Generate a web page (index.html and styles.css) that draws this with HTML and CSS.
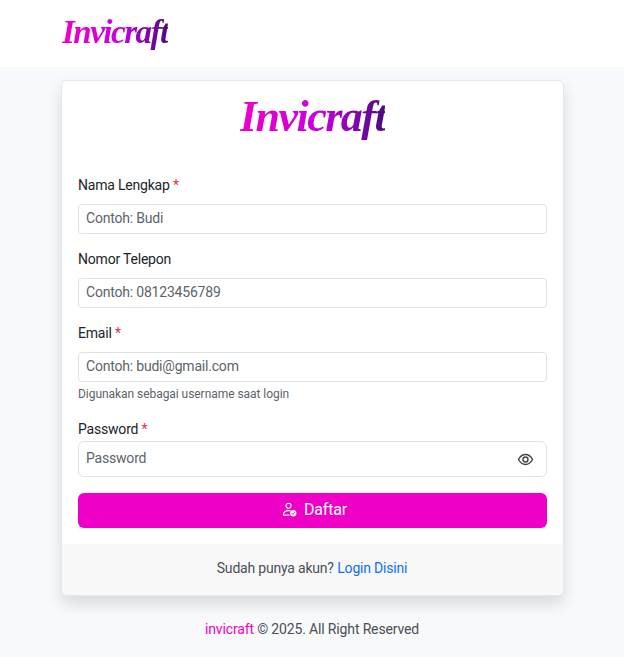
FILE: index.html
```html
<!DOCTYPE html>
<html lang="id">
<head>
<meta charset="utf-8">
<title>Invicraft - Daftar</title>
<link rel="stylesheet" href="styles.css">
</head>
<body>
<header class="navbar"><a class="brand brand-small">Invicraft</a></header>
<main class="page">
  <section class="card">
    <div class="card-logo"><span class="brand brand-large">Invicraft</span></div>
    <form class="form">
      <div class="field">
        <label class="label">Nama Lengkap <span class="req">*</span></label>
        <input class="input" type="text" placeholder="Contoh: Budi">
      </div>
      <div class="field">
        <label class="label">Nomor Telepon</label>
        <input class="input" type="text" placeholder="Contoh: 08123456789">
      </div>
      <div class="field field-email">
        <label class="label">Email <span class="req">*</span></label>
        <input class="input" type="text" placeholder="Contoh: budi@gmail.com">
        <small class="hint">Digunakan sebagai username saat login</small>
      </div>
      <div class="field field-pass">
        <label class="label label-tight">Password <span class="req">*</span></label>
        <div class="pass-box">
          <input class="pass-input" type="password" placeholder="Password">
          <svg class="eye" viewBox="0 0 24 24" width="17" height="17" fill="none" stroke="#444" stroke-width="2" stroke-linecap="round" stroke-linejoin="round"><path d="M2 12c2.600-4.600 6-7 10-7s7.400 2.400 10 7c-2.600 4.600-6 7-10 7s-7.400-2.400-10-7z"/><circle cx="12" cy="12" r="3.500"/></svg>
        </div>
      </div>
      <button class="submit" type="button">
        <svg viewBox="0 0 16 16" width="15" height="15" fill="none" stroke="#fff" stroke-width="1.200" stroke-linecap="round"><circle cx="7" cy="4" r="2.700"/><path d="M1.500 14c0-3 2.200-4.800 5.500-4.800 .6 0 1.100.1 1.600.2M1.500 14h6"/><circle cx="12" cy="12" r="3.400" fill="#fff" stroke="none"/><path d="M10.500 12l1.100 1.100 1.900-2" stroke="#ee00c6" stroke-width="1"/></svg>
        <span>Daftar</span>
      </button>
    </form>
    <div class="card-footer">Sudah punya akun? <a class="link">Login Disini</a></div>
  </section>
  <footer class="copy"><span class="copy-brand">invicraft</span> © 2025. All Right Reserved</footer>
</main>
</body>
</html>
```
FILE: styles.css
```css
* { box-sizing: border-box; }
html, body { margin: 0; height: 100%; }
body {
  background: #f8f9fa;
  color: #212529;
  font-family: Roboto, "Liberation Sans", sans-serif;
  font-size: 14px;
  letter-spacing: -0.200px;
  overflow: hidden;
}
.navbar {
  height: 67px;
  background: #fff;
  padding: 0 62px 3px;
  display: flex;
  align-items: center;
}
.brand {
  font-family: "Liberation Serif", serif;
  font-weight: 700;
  font-style: italic;
  background: linear-gradient(90deg, #f000c8 0%, #c800e0 55%, #4b0a82 100%);
  -webkit-background-clip: text;
  background-clip: text;
  color: transparent;
  line-height: 1.100;
  display: inline-block;
}
.brand-small { font-size: 33px; letter-spacing: -1.500px; }
.brand-large { font-size: 44px; letter-spacing: -1.500px; }
.page { padding: 13px 60px 0 61px; }
.card {
  background: #fff;
  border: 1px solid #e6e7e9;
  border-radius: 6px;
  box-shadow: 0 8px 16px rgba(0, 0, 0, .13);
  overflow: hidden;
}
.card-logo {
  height: 72px;
  display: flex;
  align-items: center;
  justify-content: center;
}
.form { padding: 24px 16px 16px; display: flex; flex-direction: column; }
.field { display: flex; flex-direction: column; margin-bottom: 17px; }
.field-email { margin-bottom: 20px; }
.field-pass { margin-bottom: 16px; }
.label { height: 17px; line-height: 17px; margin-bottom: 10px; color: #212529; }
.label-tight { margin-bottom: 3px; }
.req { color: #dc3545; }
.input {
  height: 30px;
  border: 1px solid #dee2e6;
  border-radius: 4px;
  padding: 0 7px 3px;
  font: 14px Roboto, sans-serif;
  letter-spacing: -0.200px;
  background: #fff;
  outline: none;
}
.input::placeholder, .pass-input::placeholder { color: #5c636a; opacity: 1; }
.hint { font-size: 12px; letter-spacing: -0.050px; line-height: 14px; color: #5c636a; margin-top: 5px; }
.pass-box {
  height: 36px;
  border: 1px solid #dee2e6;
  border-radius: 6px;
  padding: 0 12px 0 7px;
  display: flex;
  align-items: center;
  justify-content: space-between;
}
.pass-input {
  flex: 1;
  min-width: 0;
  border: 0;
  outline: none;
  padding: 0 0 3px;
  font: 14px Roboto, sans-serif;
  letter-spacing: -0.200px;
  background: transparent;
}
.eye { flex: none; }
.submit {
  height: 35px;
  border: 0;
  border-radius: 6px;
  background: #ee00c6;
  color: #fff;
  font: 16px Roboto, sans-serif;
  letter-spacing: -0.200px;
  padding: 0 0 3px 4px;
  display: flex;
  align-items: center;
  justify-content: center;
  gap: 7px;
}
.card-footer {
  height: 51px;
  background: #f8f8f8;
  display: flex;
  align-items: center;
  justify-content: center;
  gap: 3.500px;
  color: #495057;
  padding: 0 1px 3px 0;
}
.link { color: #0d6efd; }
.copy { text-align: center; margin-top: 25px; padding-right: 1px; letter-spacing: -0.150px; color: #495057; }
.copy-brand { color: #ee00c6; }
```
